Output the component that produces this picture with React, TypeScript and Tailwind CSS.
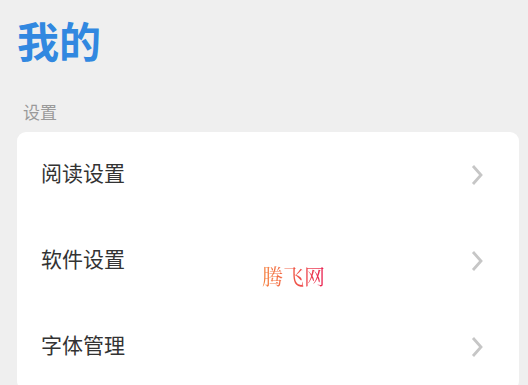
import React from "react";

const Chevron = () => (
  <svg width="14" height="22" viewBox="0 0 14 22" fill="none">
    <path d="M3 2 L11 11 L3 20" stroke="#c6c6c6" strokeWidth="2.8" strokeLinecap="butt" strokeLinejoin="miter" />
  </svg>
);

const Row = ({ label }: { label: string }) => (
  <div className="flex h-[86px] items-center justify-between pl-[24px] pr-[35px]">
    <span className="pb-[6px] text-[21px] leading-none text-[#333333]">{label}</span>
    <Chevron />
  </div>
);

export default function App() {
  return (
    <div
      className="relative h-[385px] w-[528px] overflow-hidden bg-[#efefef]"
      style={{ fontFamily: '"Noto Sans CJK SC", "Noto Sans", sans-serif' }}
    >
      <div className="pl-[17px] pr-[9px] pt-[14px]">
        <h1 className="h-[52px] text-[42px] font-bold leading-[52px] text-[#3188e0]">我的</h1>
        <div className="mt-[36px] pl-[6px] text-[17px] leading-[20px] text-[#9a9a9a]">设置</div>
        <div className="mt-[10px] rounded-[9px] bg-white">
          <Row label="阅读设置" />
          <Row label="软件设置" />
          <Row label="字体管理" />
        </div>
      </div>
      <div
        className="absolute left-[262px] top-[262px] bg-gradient-to-r from-[#f5803a] to-[#e8184f] bg-clip-text text-[21px] leading-[26px] text-transparent"
        style={{ fontFamily: '"Noto Serif CJK SC", "Noto Sans CJK SC", serif' }}
      >
        腾飞网
      </div>
    </div>
  );
}
